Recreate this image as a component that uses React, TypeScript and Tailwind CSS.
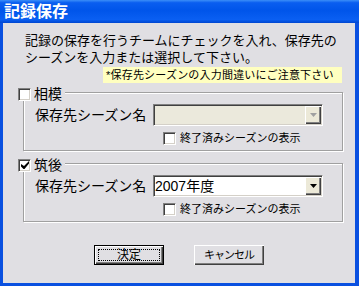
import React from "react";

const sunken =
  "border border-t-[#808080] border-l-[#808080] border-b-white border-r-white shadow-[inset_1px_1px_0_#404040,inset_-1px_-1px_0_#d4d0c8]";

function CheckBox({ checked }: { checked?: boolean }) {
  return (
    <span className={`w-[13px] h-[13px] shrink-0 bg-white flex items-center justify-center ${sunken}`}>
      {checked && (
        <svg width="8" height="8" viewBox="0 0 8 8">
          <path d="M0 3 L0 5.5 L2.5 8 L3.5 8 L8 2.5 L8 0 L3 5 Z" fill="#000" />
        </svg>
      )}
    </span>
  );
}

function Combo({ value, disabled }: { value?: string; disabled?: boolean }) {
  return (
    <div
      className={`w-[170px] h-[22px] flex items-stretch ${sunken} ${disabled ? "bg-[#ebe9dc]" : "bg-white"}`}
    >
      <span className="flex-1 flex items-center pl-[1px] text-[14px] leading-none">{value}</span>
      <span className="w-[16px] my-[1px] mr-[1px] flex items-center justify-center bg-[#ece9d8] shadow-[inset_1px_1px_0_#fff,inset_-1px_-1px_0_#404040,inset_-2px_-2px_0_#808080]">
        <svg width="7" height="4" viewBox="0 0 7 4">
          <polygon points="0,0 7,0 3.5,4" fill={disabled ? "#a0a0a0" : "#000"} />
        </svg>
      </span>
    </div>
  );
}

function Group({ title, checked, value, disabled, mt }: { title: string; checked?: boolean; value?: string; disabled?: boolean; mt: string }) {
  return (
    <div className={`${mt} ml-[20px] mr-[12px] border border-[#a0a0a0] shadow-[1px_1px_0_#fff,inset_1px_1px_0_#fff] pb-[5px]`}>
      <div className="-mt-[6px] -ml-[6px] h-[14px] w-fit flex items-center gap-[3px] pr-[3px] bg-[#e0dfe3]">
        <CheckBox checked={checked} />
        <span className="text-[14px] leading-none">{title}</span>
      </div>
      <div className="mt-[3px] h-[22px] flex items-center pl-[11px]">
        <span className="w-[118px] text-[14px] leading-none">保存先シーズン名</span>
        <Combo value={value} disabled={disabled} />
      </div>
      <div className="mt-[6px] h-[13px] flex items-center pl-[139px] gap-[4px]">
        <CheckBox />
        <span className="text-[11px] leading-none">終了済みシーズンの表示</span>
      </div>
    </div>
  );
}

export default function App() {
  return (
    <div className="w-[359px] h-[286px] flex flex-col overflow-hidden font-['Liberation_Sans','Noto_Sans_CJK_JP',sans-serif] text-black">
      <div className="h-[23px] shrink-0 flex items-center pl-[4px] text-white font-bold text-[16px] bg-[linear-gradient(to_bottom,#3b8ef8_0%,#0a5ef0_12%,#0055ea_45%,#0a5ff2_85%,#0046d0_100%)]">
        記録保存
      </div>
      <div className="flex-1 flex flex-col bg-[#e0dfe3] border-l-[3px] border-r-[4px] border-b-[3px] border-[#0a50e0]">
        <div className="pt-[9px] pl-[22px] text-[13px] leading-[17px]">
          <div>記録の保存を行うチームにチェックを入れ、保存先の</div>
          <div>シーズンを入力または選択して下さい。</div>
        </div>
        <div className="mt-[1px] ml-[100px] w-[239px] h-[16px] flex items-center pl-[3px] bg-[#ffffc0] text-[11px] tracking-[0.2px] leading-none">
          *保存先シーズンの入力間違いにご注意下さい
        </div>
        <Group mt="mt-[9px]" title="相模" disabled />
        <Group mt="mt-[12px]" title="筑後" checked value="2007年度" />
        <div className="mt-[23px] flex justify-center gap-[30px]">
          <div className="w-[70px] h-[20px] border border-black p-[3px] flex shadow-[inset_1px_1px_0_#fff,inset_-1px_-1px_0_#404040,inset_-2px_-2px_0_#808080]">
            <span className="flex-1 border border-dotted border-black flex items-center justify-center text-[12px] leading-none">
              決定
            </span>
          </div>
          <div className="w-[70px] h-[20px] flex items-center justify-center text-[11px] tracking-[-1px] leading-none shadow-[inset_1px_1px_0_#fff,inset_-1px_-1px_0_#404040,inset_-2px_-2px_0_#808080]">
            キャンセル
          </div>
        </div>
      </div>
    </div>
  );
}
